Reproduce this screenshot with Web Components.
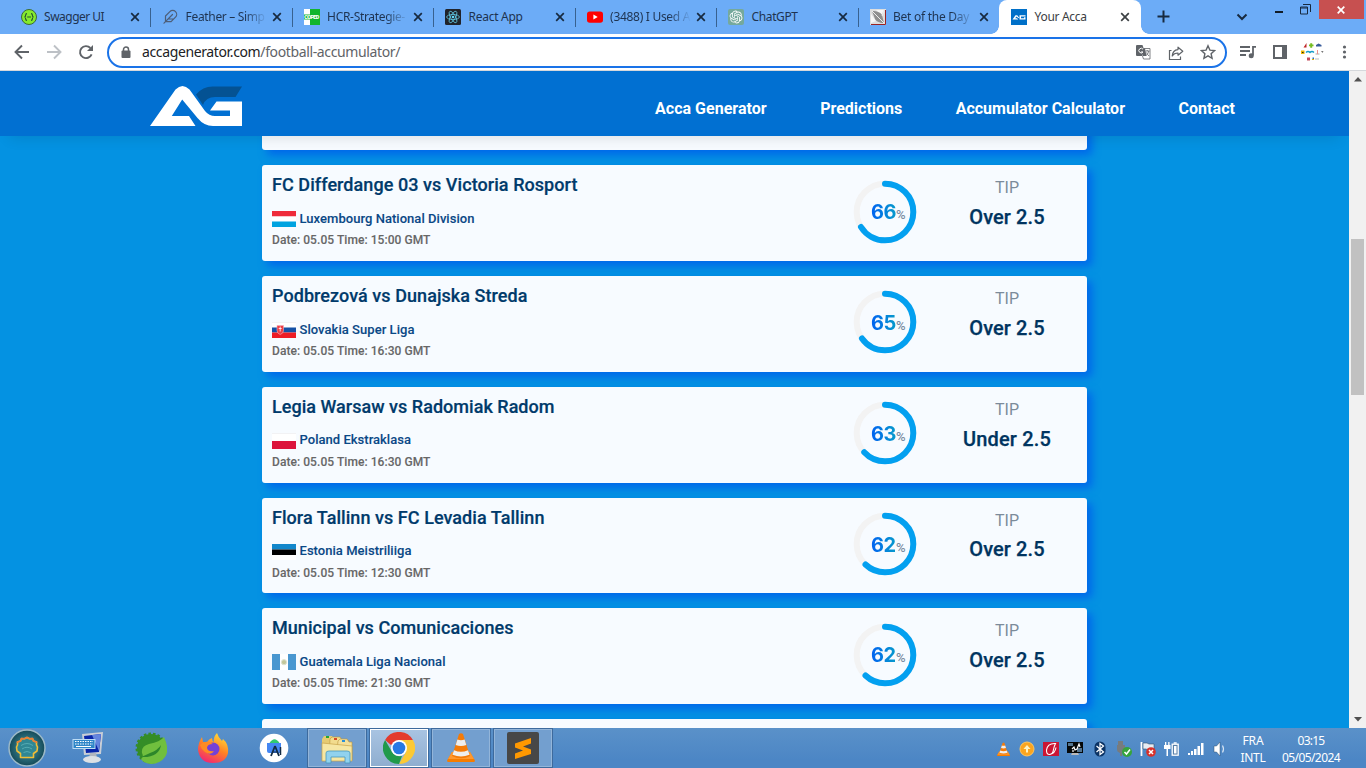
<!DOCTYPE html>
<html lang="en">
<head>
<meta charset="utf-8">
<title>Your Acca</title>
<style>
html,body{margin:0;height:768px;width:1366px;overflow:hidden}
body{font-family:"Noto Sans","Open Sans",sans-serif}
</style>
</head>
<body>
<desktop-screen></desktop-screen>
<script>
const ICONS = {
swagger:'<circle cx="8" cy="8" r="7.5" fill="#85ea2d" stroke="#3c6b35"/><g fill="none" stroke="#24502f" stroke-width="1.1"><path d="M6 4.600c-1.400 0-1.400.6-1.400 1.700S4.400 8 3.400 8c1 0 1.200.5 1.200 1.700s0 1.700 1.400 1.700M10 4.600c1.400 0 1.400.6 1.400 1.700S11.600 8 12.600 8c-1 0-1.200.5-1.200 1.700s0 1.700-1.400 1.700M6.200 8h3.800"/></g>',
feather:'<g fill="none" stroke="#4d5e78" stroke-width="1.2" stroke-linecap="round" stroke-linejoin="round"><path d="M13.500 8.200a3.900 3.900 0 0 0-5.600-5.600L3.500 7v5.600h5.600zM10.500 5.500l-8.500 8.700M11.500 10H6.200"/></g>',
coped:'<path fill="#fff" d="M0 0h6v16H0z"/><path fill="#12b52c" d="M6 0h10v16H6z"/><path fill="#12b52c" d="M0 5.500h6v5H0z"/><text x=".3" y="10" font-family="Roboto" font-size="5.500" font-weight="900" fill="#fff" textLength="15">COPED</text>',
react:'<rect width="16" height="16" rx="1.500" fill="#20232a"/><g fill="none" stroke="#61c6df" stroke-width=".8"><ellipse cx="8" cy="8" rx="6.400" ry="2.500"/><ellipse cx="8" cy="8" rx="6.400" ry="2.500" transform="rotate(60 8 8)"/><ellipse cx="8" cy="8" rx="6.400" ry="2.500" transform="rotate(120 8 8)"/></g><circle cx="8" cy="8" r="1.300" fill="#61dafb"/>',
youtube:'<rect y="2.500" width="16" height="11.300" rx="2.800" fill="#f00"/><path fill="#fff" d="M6.400 5.600v5l4.300-2.500z"/>',
gpt:'<rect width="16" height="16" rx="2" fill="#75a99c"/><path transform="translate(1.600 1.600) scale(.535)" fill="#fff" d="M22.2819 9.8211a5.9847 5.9847 0 0 0-.5157-4.9108 6.0462 6.0462 0 0 0-6.5098-2.9A6.0651 6.0651 0 0 0 4.9807 4.1818a5.9847 5.9847 0 0 0-3.9977 2.9 6.0462 6.0462 0 0 0 .7427 7.0966 5.98 5.98 0 0 0 .511 4.9107 6.051 6.051 0 0 0 6.5146 2.9001A5.9847 5.9847 0 0 0 13.2599 24a6.0557 6.0557 0 0 0 5.7718-4.2058 5.9894 5.9894 0 0 0 3.9977-2.9001 6.0557 6.0557 0 0 0-.7475-7.0729zm-9.022 12.6081a4.4755 4.4755 0 0 1-2.8764-1.0408l.1419-.0804 4.7783-2.7582a.7948.7948 0 0 0 .3927-.6813v-6.7369l2.02 1.1686a.071.071 0 0 1 .038.052v5.5826a4.504 4.504 0 0 1-4.4945 4.4944zm-9.6607-4.1254a4.4708 4.4708 0 0 1-.5346-3.0137l.142.0852 4.783 2.7582a.7712.7712 0 0 0 .7806 0l5.8428-3.3685v2.3324a.0804.0804 0 0 1-.0332.0615L9.74 19.9502a4.4992 4.4992 0 0 1-6.1408-1.6464zM2.3408 7.8956a4.485 4.485 0 0 1 2.3655-1.9728V11.6a.7664.7664 0 0 0 .3879.6765l5.8144 3.3543-2.0201 1.1685a.0757.0757 0 0 1-.071 0l-4.8303-2.7865A4.504 4.504 0 0 1 2.3408 7.872zm16.5963 3.8558L13.1038 8.364 15.1192 7.2a.0757.0757 0 0 1 .071 0l4.8303 2.7913a4.4944 4.4944 0 0 1-.6765 8.1042v-5.6772a.79.79 0 0 0-.407-.667zm2.0107-3.0231l-.142-.0852-4.7735-2.7818a.7759.7759 0 0 0-.7854 0L9.409 9.2297V6.8974a.0662.0662 0 0 1 .0284-.0615l4.8303-2.7866a4.4992 4.4992 0 0 1 6.6802 4.66zM8.3065 12.863l-2.02-1.1638a.0804.0804 0 0 1-.038-.0567V6.0742a4.4992 4.4992 0 0 1 7.3757-3.4537l-.142.0805L8.704 5.459a.7948.7948 0 0 0-.3927.6813zm1.0976-2.3654l2.602-1.4998 2.6069 1.4998v2.9994l-2.5974 1.4997-2.6067-1.4997Z"/>',
bet:'<path fill="#dedede" d="M0 0h16v16H0z"/><path fill="#f7f7f7" d="M1 5l5 7-5 2zM6 1h8l-3 5z"/><path fill="#8f8f8f" d="M2 2c5 0 8 1 10 4l2 8c-5 0-8-2-9-4z"/><path d="M2 2l12 12M14 2l-2 5" stroke="#eee"/><path d="M15.500 1v14.500H1" fill="none" stroke="#9b2222"/>',
acca:'<path fill="#0070c8" d="M0 0h16v16H0z"/><path fill="#fff" d="M1.500 10.500L4.500 6.200h1.700l2.200 2.900h-1L5.400 7.600 4.200 9.200h1.900l1 1.300z"/><path fill="#fff" d="M8.500 6.200h6v1.300H10v1.700h3v-1h1.500v2.300H8.500z"/>',
vlc:'<path d="M7 20h18l5 8.500q0 1.500-1.500 1.500h-25Q2 30 2 28.500z" fill="#f57c00"/><path d="M7 20h18l4 7H3z" fill="#ff982e"/><path d="M14 2q2-1.500 4 0l7 22q-9 4.500-18 0z" fill="#f47b08"/><path d="M12.400 7.500q3.600 1.300 7.200 0l1.700 5.500q-5.300 2-10.600 0zM9 18.200q7 3 14 0l1.500 4.600q-8.500 3.300-17 0z" fill="#eee"/>'
};
class Glyph extends HTMLElement{
  constructor(){super();this.attachShadow({mode:'open'});}
  connectedCallback(){
    const s=+this.getAttribute('size')||16,b=this.getAttribute('box')||s;
    this.shadowRoot.innerHTML=`<style>:host{display:block;flex:none;width:${s}px;height:${s}px}svg{display:block}</style><svg width="${s}" height="${s}" viewBox="0 0 ${b} ${b}">${ICONS[this.getAttribute('name')]}</svg>`;
  }
}
/* Text run whose tracking is adjusted so that it spans the width in "w". */
class FitText extends HTMLElement{
  constructor(){super();this.attachShadow({mode:'open'}).innerHTML='<style>:host{display:inline-block;white-space:pre}</style><slot></slot>';}
  connectedCallback(){
    const w=+this.getAttribute('w');
    const n=this.textContent.length;
    this.style.letterSpacing=((w-this.getBoundingClientRect().width)/n).toFixed(3)+'px';
  }
}
class BrowserTab extends HTMLElement{
  constructor(){super();this.attachShadow({mode:'open'});}
  connectedCallback(){
    const a=n=>this.getAttribute(n),act=this.hasAttribute('active');
    this.shadowRoot.innerHTML=`<style>
    :host{display:flex;flex:none;width:141.500px;height:34px;box-sizing:border-box;padding:0 0 0 12px;align-items:center;position:relative;color:#1e3350;font-size:12px}
    .t{width:81px;margin-left:7.600px;white-space:nowrap;line-height:18px;${a('fade')!==null?'-webkit-mask-image:linear-gradient(90deg,#000 72%,transparent)':''}}
    .x{margin-left:${act?4.5:5.2}px}
    .sep{position:absolute;right:-1px;top:8px;width:1px;height:19px;background:#38618f}
    :host([active]){background:#fff;border-radius:8px 8px 0 0;color:#3c4043}
    .f{position:absolute;bottom:0;width:8px;height:8px}
    .l{left:-8px;background:radial-gradient(circle at 0 0,transparent 7.500px,#fff 8px)}
    .r{right:-8px;background:radial-gradient(circle at 100% 0,transparent 7.500px,#fff 8px)}
    </style><x-glyph name="${a('icon')}"></x-glyph><div class="t"><fit-text w="${a('w')}">${a('label')}</fit-text></div>
    <svg class="x" width="10" height="10" viewBox="0 0 10 10"><path d="M1.200 1.200l7.600 7.600M8.800 1.200L1.200 8.800" stroke="${act?'#3c4043':'#172a40'}" stroke-width="1.700"/></svg>
    ${act?'<i class="f l"></i><i class="f r"></i>':(this.hasAttribute('nosep')?'':'<i class="sep"></i>')}`;
  }
}
class TabStrip extends HTMLElement{
  constructor(){super();this.attachShadow({mode:'open'}).innerHTML=`<style>
  :host{display:flex;height:34px;background:#6cacf7;padding-left:8.500px;box-sizing:border-box}
  .plus{margin:10px 0 0 16px}.chev{margin:13px 0 0 66px}.min{margin:11px 0 0 27px}.res{margin:4px 0 0 16px}
  .close{margin-left:8px;width:45px;height:19px;background:#c75050;display:grid;place-items:center}svg{display:block;flex:none}
  </style>
  <browser-tab icon="swagger" label="Swagger UI" w="60"></browser-tab>
  <browser-tab icon="feather" label="Feather – Simp" w="79" fade></browser-tab>
  <browser-tab icon="coped" label="HCR-Strategie-" w="78" fade></browser-tab>
  <browser-tab icon="react" label="React App" w="54"></browser-tab>
  <browser-tab icon="youtube" label="(3488) I Used A" w="80" fade></browser-tab>
  <browser-tab icon="gpt" label="ChatGPT" w="46"></browser-tab>
  <browser-tab icon="bet" label="Bet of the Day" w="76" fade nosep></browser-tab>
  <browser-tab icon="acca" label="Your Acca" w="52" active></browser-tab>
  <svg class="plus" width="13" height="13"><path d="M6.500 .5v12M.5 6.500h12" stroke="#172a40" stroke-width="2"/></svg>
  <svg class="chev" width="12" height="8"><path d="M1.500 1.500l4.500 4.500 4.500-4.500" fill="none" stroke="#172a40" stroke-width="2"/></svg>
  <svg class="min" width="9" height="3"><path fill="#111c28" d="M0 0h8v2H0z"/></svg>
  <svg class="res" width="11" height="11"><path d="M3 .5h7.500V8M.5 3h7v7h-7zM.5 4h7" fill="none" stroke="#172a40"/></svg>
  <div class="close"><svg width="8" height="8"><path d="M.7.7l6.600 6.600M7.300.7L.7 7.300" stroke="#fff" stroke-width="1.700"/></svg></div>`;}
}
class AddressBar extends HTMLElement{
  constructor(){super();this.attachShadow({mode:'open'}).innerHTML=`<style>
  :host{display:flex;height:37px;background:#fff;align-items:flex-start;border-bottom:1px solid #d5d8dc;box-sizing:border-box;padding:0 0 0 14px}
  svg{display:block;flex:none}.n{margin-top:10px}
  .pill{margin-left:13px;width:1120px;height:31px;margin-top:3px;box-sizing:border-box;border:2px solid #1a73e8;border-radius:16px;display:flex;align-items:center;padding-left:12px;font-size:14px;color:#202124}
  .u{margin-left:11px;line-height:20px;margin-top:-1px}.u span{color:#5f6368}.g{flex:1}
  </style>
  <svg class="n" width="16" height="16"><path d="M15 8H2M8 1.500L1.500 8 8 14.500" fill="none" stroke="#5f6368" stroke-width="1.900"/></svg>
  <svg class="n" style="margin-left:16px" width="16" height="16"><path d="M1 8h13M8 1.500L14.500 8 8 14.500" fill="none" stroke="#bdc1c6" stroke-width="1.900"/></svg>
  <svg class="n" style="margin-left:16px" width="16" height="16"><path d="M13.600 10.300A6 6 0 1 1 12.400 4" fill="none" stroke="#5f6368" stroke-width="1.900"/><path d="M15 1v6H9z" fill="#5f6368"/></svg>
  <div class="pill">
  <svg width="10" height="13"><path d="M2.500 5V3.500a2.500 2.500 0 0 1 5 0V5" fill="none" stroke="#5f6368" stroke-width="1.500"/><rect x=".5" y="4.500" width="9" height="7.500" rx="1" fill="#5f6368"/></svg>
  <div class="u"><fit-text w="258">accagenerator.com<span>/football-accumulator/</span></fit-text></div><div class="g"></div>
  <svg width="15" height="15" style="margin-right:17px"><path fill="#5f6368" d="M1 0h5.500l1 3 2.500 8H6H1q-1 0-1-1V1q0-1 1-1z"/><path d="M8 3.500h6v10.500H7.500l-1-3" fill="#fff" stroke="#5f6368" stroke-width=".8"/><path fill="#5f6368" d="M7 3.500h2l1.500 7.500H7z"/><path d="M7 4.200A2.300 2.300 0 1 0 7 7H5" fill="none" stroke="#fff"/><path d="M9.500 6h4M11.200 5v1M12.800 6q-.8 3-2.600 4.500M10.500 7.500q1 2.200 2.500 3.500" fill="none" stroke="#5f6368" stroke-width=".8"/></svg>
  <svg width="16" height="16" style="margin-right:16px"><path d="M3.500 5.500h-2v9h11v-3" fill="none" stroke="#5f6368" stroke-width="1.200"/><path d="M10 2.200l4.800 4-4.800 4V8Q6 8 4.200 11 4.700 5 10 4.600z" fill="none" stroke="#5f6368" stroke-width="1.200" stroke-linejoin="round"/></svg>
  <svg width="16" height="16" style="margin-right:9px;margin-top:-1px"><path d="M8 1.800l1.900 4.300 4.700.5-3.500 3.100 1 4.600L8 11.900l-4.100 2.400 1-4.600L1.400 6.600l4.700-.5z" fill="none" stroke="#5f6368" stroke-width="1.400"/></svg>
  </div>
  <svg style="margin:11px 0 0 13px" width="16" height="14"><path d="M0 2h10M0 6h10M0 10h6M13 1v9.500M12.300 1.800H16" stroke="#5f6368" stroke-width="1.800"/><circle cx="11.200" cy="10.800" r="2.500" fill="#5f6368"/></svg>
  <svg style="margin:11px 0 0 17px" width="14" height="14"><path fill="#5f6368" d="M0 0h14v14H0z"/><path fill="#fff" d="M2 2h7v10H2z"/></svg>
  <svg style="margin:8px 0 0 14px" width="23" height="20"><path fill="#bf2626" d="M1 5.500h1.500L5.500 1v4.500z"/><path fill="#c34a5a" d="M6 15.500h3v3H6z"/><path fill="#75bd22" d="M8 2.500h4.500v1.700H8zM9.200 1.200h2v4.500h-2z"/><path fill="#385c9b" d="M15 3l2.500-1.500L20.500 3v1.500H15z"/><path fill="#eab500" d="M0 8.500h3.500v3.500H0z"/><path d="M1 10.500h1.500" stroke="#222"/><path d="M5 10.500q2-2 4 0 2-2 4 0" fill="none" stroke="#159bc8" stroke-width="1.300"/><path d="M14.500 12h4" stroke="#aaa"/><path fill="#ec9090" d="M16 8h1v4h-1z"/><path fill="#777" d="M20 9h2.500l-1 2z"/><path fill="#2869be" d="M11.500 15.500h1.500v1.500h-1.500z"/><path fill="#ecb500" d="M11 17h2v1h-2z"/><path d="M14 17h4" stroke="#bbb"/></svg>
  <svg style="margin:11px 0 0 18px" width="6" height="14"><g fill="#5f6368"><circle cx="2.500" cy="2" r="1.600"/><circle cx="2.500" cy="7" r="1.600"/><circle cx="2.500" cy="12" r="1.600"/></g></svg>`;}
}
class SiteHeader extends HTMLElement{
  constructor(){super();this.attachShadow({mode:'open'}).innerHTML=`<style>
  :host{display:flex;flex:none;height:65px;background:#0170d2;position:relative;z-index:2;box-shadow:0 10px 14px -9px rgba(0,0,0,.12);box-sizing:border-box;padding-left:150px;font:700 16px Roboto,sans-serif;color:#fff}
  svg{display:block;margin-top:15px;flex:none}
  nav{display:flex;margin-left:413px;padding-top:28px;gap:53.500px;line-height:20px}
  </style>
  <svg width="92" height="40"><path fill="#045293" d="M46 8.500Q53 0 64 .5h28l-6.500 10.500H65q-9 0-12 8z"/><path fill="#fff" d="M0 40L25.500 3.500Q32.500-3.500 39.500 3.500L55 25q4 5 10 5h15v-5.500H60l6.500-9H92V40H63q-9 0-15.500-8L32.200 13.500 21.800 30H39L45.500 40z"/></svg>
  <nav><fit-text w="111.700">Acca Generator</fit-text><fit-text w="82">Predictions</fit-text><fit-text w="169.300">Accumulator Calculator</fit-text><fit-text w="56.500">Contact</fit-text></nav>`;}
}
const FLAGS={
 lu:'<path fill="#ef2b3a" d="M0 0h24v5.500H0z"/><path fill="#fff" d="M0 5.500h24v5H0z"/><path fill="#00a3e0" d="M0 10.500h24V16H0z"/>',
 sk:'<path fill="#fff" d="M0 0h24v5.500H0z"/><path d="M0 .3h24" stroke="#e4e4e8" stroke-width=".6"/><path fill="#1450a5" d="M0 5.500h24v5H0z"/><path fill="#ee1c25" d="M0 10.500h24V16H0z"/><path d="M5 3.500h6.500v5q0 3-3.300 4Q5 11.500 5 8.500z" fill="#ee3c45" stroke="#f4b0b8" stroke-width=".6"/><path d="M8.200 4.500v5M6.700 6.500h3" stroke="#fff" stroke-width=".8"/>',
 pl:'<path fill="#fff" d="M0 0h24v8H0z"/><path fill="#dc143c" d="M0 8h24v8H0z"/><path d="M0 .3h24" stroke="#e4e4e8" stroke-width=".6"/>',
 ee:'<path fill="#1287cb" d="M0 0h24v5.500H0z"/><path d="M0 5.500h24v5.500H0z"/><path fill="#fff" d="M0 11h24v5H0z"/>',
 gt:'<path fill="#4997d0" d="M0 0h8v16H0zM16 0h8v16h-8z"/><path fill="#fff" d="M8 0h8v16H8z"/><circle cx="12" cy="8.200" r="2.600" fill="#c3c79b" stroke="#dfe3d2"/>'
};
class MatchCard extends HTMLElement{
  constructor(){super();this.attachShadow({mode:'open'});}
  connectedCallback(){
    const a=n=>this.getAttribute(n);
    const base=`:host{display:flex;flex:none;height:95.750px;box-sizing:border-box;background:#f7fbff;border-radius:3px;box-shadow:5px 5px 8px #0068ea;padding:0 10px;justify-content:space-between;font-family:Roboto,sans-serif}`;
    if(!a('match')){this.shadowRoot.innerHTML=`<style>${base}</style>`;return;}
    const r=28.3,c=2*Math.PI*r,p=+a('pct');
    this.shadowRoot.innerHTML=`<style>${base}
    .info{font-weight:500}
    h3{margin:8.900px 0 0;font-size:18px;font-weight:500;line-height:22px;color:#003a6b;-webkit-text-stroke:.2px #003a6b}
    .lg{display:flex;font-size:13px;line-height:18px;margin-top:13.500px;color:#0a4886;gap:3.500px;-webkit-text-stroke:.1px #0a4886}
    .lg svg{margin-top:1.700px}
    .dt{font-size:12px;line-height:16px;margin-top:4.500px;color:#676767;-webkit-text-stroke:.1px #676767}
    .right{display:flex;width:224px;margin-right:-10px;padding-right:10px}
    .ring{position:relative;flex:none;width:64px;height:64px;margin-top:14.200px}
    .pc{position:absolute;inset:0;display:flex;align-items:baseline;padding:20.700px 0 0 17.900px;line-height:24px;color:#7b8da3;font-size:13px;font-weight:500}
    .pc b{font:700 20px/24px Inter,sans-serif;background:linear-gradient(90deg,#0062f2,#079bcb);-webkit-background-clip:text;color:transparent}
    .tip{flex:1;text-align:center;color:#7c8b9a;font-size:16px;line-height:20px;padding:12.900px 0 0 20px}
    .tip strong{display:block;font-weight:500;font-size:20px;line-height:24px;color:#003460;margin-top:6.900px;-webkit-text-stroke:.25px #003460}
    </style>
    <div class="info"><h3><fit-text w="${a('tw')}">${a('match')}</fit-text></h3>
    <div class="lg"><svg width="24" height="16">${FLAGS[a('flag')]}</svg><fit-text w="${a('lw')}">${a('league')}</fit-text></div>
    <div class="dt"><fit-text w="158.500">Date: 05.05 Time: ${a('time')} GMT</fit-text></div></div>
    <div class="right"><div class="ring"><svg width="64" height="64"><circle cx="32" cy="32" r="${r}" fill="none" stroke="#f3f3f3" stroke-width="6"/><circle cx="32" cy="32" r="${r}" fill="none" stroke="#03a0f0" stroke-width="6" stroke-linecap="round" stroke-dasharray="${c*p/100} ${c}" transform="rotate(-90 32 32)"/></svg><div class="pc"><b><fit-text w="25">${p}</fit-text></b><fit-text w="10.500">%</fit-text></div></div>
    <div class="tip">TIP<strong><fit-text w="${a('pw')||75.5}">${a('tip')||'Over 2.5'}</fit-text></strong></div></div>`;
  }
}
class PageView extends HTMLElement{
  constructor(){super();this.attachShadow({mode:'open'}).innerHTML=`<style>
  :host{display:flex;height:657px;overflow:hidden}
  .page{width:1349px;background:#0492e2;display:flex;flex-direction:column;overflow:hidden}
  main{margin:-81.350px 0 0 262px;width:825px;display:flex;flex-direction:column;gap:15px}
  .sb{width:17px;background:#f1f1f1;display:flex;flex-direction:column;align-items:center}
  .th{width:13px;height:156px;margin-top:157px;background:#c1c1c1}svg{display:block;margin-top:6px}
  </style><div class="page"><site-header></site-header><main>
  <match-card></match-card>
  <match-card match="FC Differdange 03 vs Victoria Rosport" tw="305.500" flag="lu" league="Luxembourg National Division" lw="175" time="15:00" pct="66"></match-card>
  <match-card match="Podbrezová vs Dunajska Streda" tw="255.500" flag="sk" league="Slovakia Super Liga" lw="115" time="16:30" pct="65"></match-card>
  <match-card match="Legia Warsaw vs Radomiak Radom" tw="282.500" flag="pl" league="Poland Ekstraklasa" lw="111.500" time="16:30" pct="63" tip="Under 2.5" pw="88"></match-card>
  <match-card match="Flora Tallinn vs FC Levadia Tallinn" tw="272.500" flag="ee" league="Estonia Meistriliiga" lw="112" time="12:30" pct="62"></match-card>
  <match-card match="Municipal vs Comunicaciones" tw="241.500" flag="gt" league="Guatemala Liga Nacional" lw="146" time="21:30" pct="62"></match-card>
  <match-card></match-card></main></div>
  <div class="sb"><svg width="8" height="5"><path fill="#505050" d="M0 4.500L4 0l4 4.500z"/></svg><div class="th"></div><svg style="margin-top:322px" width="8" height="5"><path fill="#505050" d="M0 0h8L4 4.500z"/></svg></div>`;}
}
class TaskBar extends HTMLElement{
  constructor(){super();this.attachShadow({mode:'open'}).innerHTML=`<style>
  :host{display:flex;height:40px;background:linear-gradient(#5a91c9,#4c86c5 80%);align-items:center;color:#fff;font-size:12px;position:relative;z-index:3}
  svg{display:block;flex:none}
  .b{width:60px;height:40px;box-sizing:border-box;border:1px solid #3d6a9d;margin-right:2px;display:grid;place-items:center;background:#739fcf;box-shadow:inset 0 0 0 1px #93b5d9}
  .b.on{background:linear-gradient(#a9c4e2,#8fadcf);box-shadow:inset 0 0 0 1px #fff}
  .start{display:flex;width:307px;align-items:center}
  .tray{display:flex;align-items:center;width:227px;gap:8.150px;margin-left:441px;margin-top:2px}
  .k{display:flex;flex-direction:column;align-items:center;line-height:17px;padding-top:1px}
  </style>
  <div class="start">
   <svg style="margin-left:8px" width="38" height="38"><defs><radialGradient id="o"><stop offset="0" stop-color="#48a0ad"/><stop offset="1" stop-color="#154957"/></radialGradient></defs><circle cx="19" cy="19" r="18" fill="url(#o)" stroke="#9cb9c7" stroke-width="1.500"/><path d="M12.500 28.500v-4l-3.500-2.500-.5-4 1-2 0-3 3-1 1-2.500 3 .3 2.500-1.300 2.500 1.300 3-.3 1 2.500 3 1 0 3 1 2-.5 4-3.500 2.500v4z" fill="#2f8794" stroke="#f0bd35" stroke-width="1.600" stroke-linejoin="round"/><path d="M9.500 14v-1l3-1 1-2.500 3 .3 2.500-1.300 2.500 1.300 3-.3 1 2.500 3 1v1" stroke="#ed7d35" stroke-width="1.600" fill="none"/><path d="M13 16.500q6-4 12 0M14 20q5-3.500 10 0M15.500 23.500q3.500-2 7 0" stroke="#55abb3" fill="none"/></svg>
   <svg style="margin-left:26px" width="34" height="34"><path d="M10 3l21-2-2 22-17 1z" fill="#c9ced6"/><path d="M12 5l17-2-2 18-13 1z" fill="#0925a8"/><path d="M20 4l9-1-2 17z" fill="#6485de"/><path d="M18 22h6l1 5h-8z" fill="#b2b6be"/><ellipse cx="20" cy="28.500" rx="9" ry="3.500" fill="#dde0e4"/><rect x="1" y="8.500" width="22" height="9" fill="#2f86c8" stroke="#bbdcf5"/><path d="M3 10.500h18M3 13h18" stroke="#fff" stroke-dasharray="1.500 1"/><path d="M4 15.500h15" stroke="#fff"/></svg>
   <svg style="margin-left:29px" width="32" height="34"><circle cx="16" cy="17" r="14" fill="#348d27" stroke="#348d27" stroke-width="3" stroke-dasharray="2.500 2"/><path d="M29 6q6 13 1 20-5 7-14 7-8-1-10-5 3-2 1-6-1-7 7-9 11-2 15-7z" fill="#70bf3e"/><path d="M6 26q5-2 9-4 8-3 11-8-2 13-20 12z" fill="#2d872a"/></svg>
   <svg style="margin-left:30px" width="32" height="34"><defs><linearGradient id="ff" x1=".8" y1="0" x2=".3" y2="1"><stop offset="0" stop-color="#ffe43b"/><stop offset=".5" stop-color="#ff8224"/><stop offset="1" stop-color="#f22673"/></linearGradient></defs><path d="M20 2q1 4 5 8l1-2q6 5 5 14-2 10-15 10T1 19q0-7 4-13l1 5 4 0q2-3 5-4 0 3 2 4-1-5 3-9z" fill="url(#ff)"/><circle cx="16" cy="18" r="6.500" fill="#7541d6"/><path d="M3 14q5-6 13-1-6 0-6 4 1 4 7 3-3 5-9 1-4-3-5-7z" fill="#ff8b22"/></svg>
   <svg style="margin-left:30px" width="30" height="30"><circle cx="15" cy="15" r="14.300" fill="#fff"/><path d="M10.500 10q5-7.500 10 0z" fill="#31c971"/><path d="M8 10h14v10H10q-2 0-2-2z" fill="#4486f2"/><path d="M16 13l-4 10M16 13l4 10" fill="none" stroke="#122b43" stroke-width="1.800"/><path d="M14 19h4" stroke="#122b43"/><path d="M21.500 14v8" stroke="#122b43" stroke-width="1.500"/></svg>
  </div>
  <div class="b"><svg width="32" height="32"><path d="M1 7l2-3h8l2 3h9v20H1z" fill="#e6cb72"/><path d="M9 7l2-2h8l2 3h6v20H8z" fill="#f2dc8e" stroke="#bb963a" stroke-width=".6"/><path d="M17 9l2-2h7l2 3h3v18H15z" fill="#f4e09a" stroke="#bb963a" stroke-width=".6"/><path d="M1 11l30 3v15H1z" fill="#f6e7a4" stroke="#c9a349" stroke-width=".7"/><path fill="#24a534" d="M5 4h3v2H5z"/><path fill="#d54a26" d="M13 6h3v2h-3z"/><path fill="#2990d8" d="M21 8h3v2h-3z"/><path d="M5 31V21q0-2 3-2h18q3 0 3 2v10h-5v-6H10v6z" fill="#91d2ee" stroke="#4698bd" stroke-width=".8"/></svg></div>
  <div class="b on"><svg width="32" height="32"><path d="M16 8h13.900A16 16 0 0 1 16 32l7-12z" fill="#fcc934"/><path d="M2.100 8A16 16 0 0 1 29.900 8H16l-8 5z" fill="#e33b2e"/><path d="M2.100 8L9 20q3 5 10 4l-3 8A16 16 0 0 1 2.100 8" fill="#219a4b"/><circle cx="16" cy="16" r="8" fill="#fff"/><circle cx="16" cy="16" r="6.300" fill="#2879e4"/></svg></div>
  <div class="b"><x-glyph name="vlc" size="32"></x-glyph></div>
  <div class="b"><svg width="32" height="32"><rect width="32" height="32" rx="2" fill="#474747"/><path fill="#ff9800" d="M8 11.500L24 6v5.500l-8 3 8 3v4.500L8 27v-5.500l8-3-8-3z"/></svg></div>
  <div class="tray">
   <x-glyph name="vlc" size="15" box="32"></x-glyph>
   <svg width="16" height="16"><circle cx="8" cy="8" r="7" fill="#fba51f" stroke="#ffc662"/><path d="M8 4L4.500 8H7v3.500h2V8h2.500z" fill="#fff3c2"/></svg>
   <svg width="16" height="16"><path fill="#cb1534" d="M0 1h16v14H0z"/><path d="M12.500 2.500Q4.500 2 3.500 9q-.2 4.500 3 4.500 3.500-.5 4-5 .5-3 2-6zM7 13.500q5-1 6-7" fill="none" stroke="#fff" stroke-width="1.100"/></svg>
   <svg width="16" height="16"><path fill="#050808" d="M0 1h16v11H0z"/><path fill="#54758f" d="M1 2h5v3H1zM10 7h5v4h-5z"/><path d="M5 8l2-2 1 3 2-1 2-5 1 3M6 9v2" stroke="#fff" stroke-width="1.200" fill="none"/><path fill="#bbb" d="M5 12h6l1 2H4z"/></svg>
   <svg width="16" height="16"><rect x="2.500" y=".5" width="11" height="15" rx="5.500" fill="#0b3364"/><path d="M4.500 5l7 6L8 13.500v-11L11.500 5l-7 6" fill="none" stroke="#fff" stroke-width="1.200"/></svg>
   <svg width="16" height="16"><path fill="#777b7e" d="M2 0h5v4h2v5q0 2-3 3v3H4v-3q-3-1-3-3V4h1z"/><circle cx="11" cy="11" r="5" fill="#36a43c"/><path d="M8.500 11l2 2 3.500-4.500" fill="none" stroke="#fff" stroke-width="1.500"/></svg>
   <svg width="16" height="16"><path d="M1.500 1v14" stroke="#fff" stroke-width="1.800"/><path fill="#e7edf3" d="M3 2h4l2 1h5v6H8L6 8H3z" stroke="#31506f" stroke-width=".6"/><circle cx="11" cy="11" r="4.800" fill="#d8312a"/><path d="M9 9l4 4M13 9l-4 4" stroke="#fff" stroke-width="1.500"/></svg>
   <svg width="16" height="16"><path fill="#fff" d="M1 1h1.300v3H1zM4.200 1h1.300v3H4.200zM0 4h6.500v4H4v7H2.500V8H0z"/><rect x="8.200" y="3.200" width="6" height="11" fill="#5880a9" stroke="#fff" stroke-width="1.300"/><path fill="#fff" d="M10 5h2.500v7.500H10zM9.700 1.200h3v1.500h-3z"/></svg>
   <svg width="16" height="16"><path fill="#fff" d="M0 12h2v2H0zM3 10h2v4H3zM6 8h2.500v6H6zM9.500 5H12v9H9.500zM13 2h2.500v12H13z"/></svg>
   <svg width="16" height="16"><path fill="#fff" stroke="#31506f" stroke-width=".5" d="M2 5h2.500L8 1v14l-3.500-4H2z"/><path d="M10.500 4.500q2 3.500 0 7" fill="none" stroke="#d5e4f3" stroke-width="1.200"/></svg>
  </div>
  <div class="k" style="width:44px;margin-left:8px"><fit-text w="21">FRA</fit-text><fit-text w="25">INTL</fit-text></div>
  <div class="k" style="width:72px"><fit-text w="27">03:15</fit-text><fit-text w="58">05/05/2024</fit-text></div>`;}
}
class DesktopScreen extends HTMLElement{
  constructor(){super();this.attachShadow({mode:'open'}).innerHTML='<style>:host{display:flex;flex-direction:column;width:1366px;height:768px;overflow:hidden}</style><tab-strip></tab-strip><address-bar></address-bar><page-view></page-view><task-bar></task-bar>';}
}
customElements.define('x-glyph',Glyph);
customElements.define('browser-tab',BrowserTab);
customElements.define('tab-strip',TabStrip);
customElements.define('address-bar',AddressBar);
customElements.define('site-header',SiteHeader);
customElements.define('match-card',MatchCard);
customElements.define('page-view',PageView);
customElements.define('task-bar',TaskBar);
customElements.define('desktop-screen',DesktopScreen);
customElements.define('fit-text',FitText);
</script>
</body>
</html>
